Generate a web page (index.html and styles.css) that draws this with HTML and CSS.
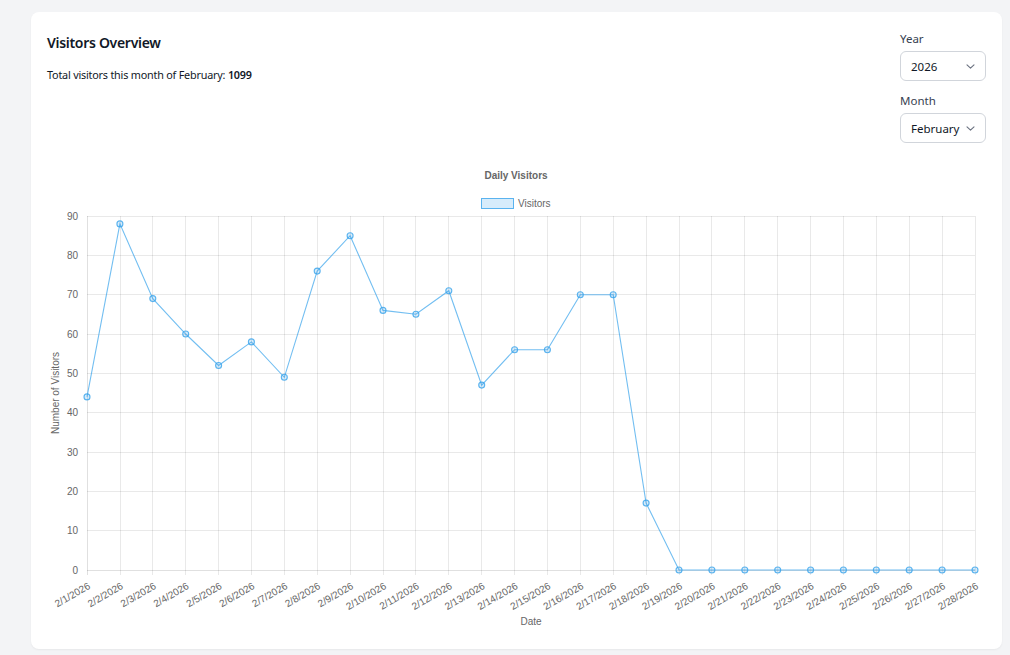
FILE: index.html
```html
<!DOCTYPE html>
<html lang="en">
<head>
<meta charset="utf-8">
<title>Visitors Overview</title>
<link rel="stylesheet" href="styles.css">
</head>
<body>
<main class="card">
  <div class="header">
    <div class="intro">
      <h2 class="title">Visitors Overview</h2>
      <p class="total">Total visitors this month of February: <strong>1099</strong></p>
    </div>
    <div class="filters">
      <div class="field">
        <div class="label">Year</div>
        <div class="select"><span>2026</span><svg class="chev" width="9" height="5" viewBox="0 0 9 5"><path d="M1 0.8l3.5 3.4 3.5-3.4" fill="none" stroke="#6b7280" stroke-width="1.1" stroke-linecap="round" stroke-linejoin="round"/></svg></div>
      </div>
      <div class="field">
        <div class="label">Month</div>
        <div class="select"><span>February</span><svg class="chev" width="9" height="5" viewBox="0 0 9 5"><path d="M1 0.8l3.5 3.4 3.5-3.4" fill="none" stroke="#6b7280" stroke-width="1.1" stroke-linecap="round" stroke-linejoin="round"/></svg></div>
      </div>
    </div>
  </div>
  <svg class="chart" width="939" height="480" viewBox="47 160 939 480">
    <text class="ctitle" x="516" y="179" text-anchor="middle">Daily Visitors</text>
    <rect x="481.5" y="198.5" width="32" height="10" fill="rgba(54,162,235,0.2)" stroke="rgba(54,162,235,0.8)" stroke-width="1"/>
    <text class="ctext" x="518" y="207">Visitors</text>
    <g class="grid">
      <line x1="87" y1="216.5" x2="975" y2="216.5"/>
      <line x1="87" y1="255.5" x2="975" y2="255.5"/>
      <line x1="87" y1="294.5" x2="975" y2="294.5"/>
      <line x1="87" y1="334.5" x2="975" y2="334.5"/>
      <line x1="87" y1="373.5" x2="975" y2="373.5"/>
      <line x1="87" y1="412.5" x2="975" y2="412.5"/>
      <line x1="87" y1="452.5" x2="975" y2="452.5"/>
      <line x1="87" y1="491.5" x2="975" y2="491.5"/>
      <line x1="87" y1="530.5" x2="975" y2="530.5"/>
      <line class="axis" x1="87" y1="570.5" x2="975" y2="570.5"/>
      <line class="axis" x1="87.5" y1="216" x2="87.5" y2="575"/>
      <line x1="120.5" y1="216" x2="120.5" y2="575"/>
      <line x1="152.5" y1="216" x2="152.5" y2="575"/>
      <line x1="185.5" y1="216" x2="185.5" y2="575"/>
      <line x1="218.5" y1="216" x2="218.5" y2="575"/>
      <line x1="251.5" y1="216" x2="251.5" y2="575"/>
      <line x1="284.5" y1="216" x2="284.5" y2="575"/>
      <line x1="317.5" y1="216" x2="317.5" y2="575"/>
      <line x1="350.5" y1="216" x2="350.5" y2="575"/>
      <line x1="383.5" y1="216" x2="383.5" y2="575"/>
      <line x1="415.5" y1="216" x2="415.5" y2="575"/>
      <line x1="448.5" y1="216" x2="448.5" y2="575"/>
      <line x1="481.5" y1="216" x2="481.5" y2="575"/>
      <line x1="514.5" y1="216" x2="514.5" y2="575"/>
      <line x1="547.5" y1="216" x2="547.5" y2="575"/>
      <line x1="580.5" y1="216" x2="580.5" y2="575"/>
      <line x1="613.5" y1="216" x2="613.5" y2="575"/>
      <line x1="646.5" y1="216" x2="646.5" y2="575"/>
      <line x1="679.5" y1="216" x2="679.5" y2="575"/>
      <line x1="711.5" y1="216" x2="711.5" y2="575"/>
      <line x1="744.5" y1="216" x2="744.5" y2="575"/>
      <line x1="777.5" y1="216" x2="777.5" y2="575"/>
      <line x1="810.5" y1="216" x2="810.5" y2="575"/>
      <line x1="843.5" y1="216" x2="843.5" y2="575"/>
      <line x1="876.5" y1="216" x2="876.5" y2="575"/>
      <line x1="909.5" y1="216" x2="909.5" y2="575"/>
      <line x1="942.5" y1="216" x2="942.5" y2="575"/>
      <line x1="975.5" y1="216" x2="975.5" y2="575"/>
    </g>
    <g class="ctext yticks" text-anchor="end">
      <text x="78" y="219.5">90</text>
      <text x="78" y="258.8">80</text>
      <text x="78" y="298.2">70</text>
      <text x="78" y="337.5">60</text>
      <text x="78" y="376.8">50</text>
      <text x="78" y="416.2">40</text>
      <text x="78" y="455.5">30</text>
      <text x="78" y="494.8">20</text>
      <text x="78" y="534.2">10</text>
      <text x="78" y="573.5">0</text>
    </g>
    <g class="ctext xticks" text-anchor="end">
      <text x="91" y="588" transform="rotate(-30 91 588)">2/1/2026</text>
      <text x="123.9" y="588" transform="rotate(-30 123.9 588)">2/2/2026</text>
      <text x="156.8" y="588" transform="rotate(-30 156.8 588)">2/3/2026</text>
      <text x="189.7" y="588" transform="rotate(-30 189.7 588)">2/4/2026</text>
      <text x="222.6" y="588" transform="rotate(-30 222.6 588)">2/5/2026</text>
      <text x="255.4" y="588" transform="rotate(-30 255.4 588)">2/6/2026</text>
      <text x="288.3" y="588" transform="rotate(-30 288.3 588)">2/7/2026</text>
      <text x="321.2" y="588" transform="rotate(-30 321.2 588)">2/8/2026</text>
      <text x="354.1" y="588" transform="rotate(-30 354.1 588)">2/9/2026</text>
      <text x="387" y="588" transform="rotate(-30 387 588)">2/10/2026</text>
      <text x="419.9" y="588" transform="rotate(-30 419.9 588)">2/11/2026</text>
      <text x="452.8" y="588" transform="rotate(-30 452.8 588)">2/12/2026</text>
      <text x="485.7" y="588" transform="rotate(-30 485.7 588)">2/13/2026</text>
      <text x="518.6" y="588" transform="rotate(-30 518.6 588)">2/14/2026</text>
      <text x="551.4" y="588" transform="rotate(-30 551.4 588)">2/15/2026</text>
      <text x="584.3" y="588" transform="rotate(-30 584.3 588)">2/16/2026</text>
      <text x="617.2" y="588" transform="rotate(-30 617.2 588)">2/17/2026</text>
      <text x="650.1" y="588" transform="rotate(-30 650.1 588)">2/18/2026</text>
      <text x="683" y="588" transform="rotate(-30 683 588)">2/19/2026</text>
      <text x="715.9" y="588" transform="rotate(-30 715.9 588)">2/20/2026</text>
      <text x="748.8" y="588" transform="rotate(-30 748.8 588)">2/21/2026</text>
      <text x="781.7" y="588" transform="rotate(-30 781.7 588)">2/22/2026</text>
      <text x="814.6" y="588" transform="rotate(-30 814.6 588)">2/23/2026</text>
      <text x="847.4" y="588" transform="rotate(-30 847.4 588)">2/24/2026</text>
      <text x="880.3" y="588" transform="rotate(-30 880.3 588)">2/25/2026</text>
      <text x="913.2" y="588" transform="rotate(-30 913.2 588)">2/26/2026</text>
      <text x="946.1" y="588" transform="rotate(-30 946.1 588)">2/27/2026</text>
      <text x="979" y="588" transform="rotate(-30 979 588)">2/28/2026</text>
    </g>
    <text class="ctext" x="531" y="625" text-anchor="middle">Date</text>
    <text class="ctext" x="59" y="393" text-anchor="middle" transform="rotate(-90 59 393)">Number of Visitors</text>
    <polyline class="line" points="87,396.9 119.9,223.9 152.8,298.6 185.7,334 218.6,365.5 251.4,341.9 284.3,377.3 317.2,271.1 350.1,235.7 383,310.4 415.9,314.3 448.8,290.7 481.7,385.1 514.6,349.7 547.4,349.7 580.3,294.7 613.2,294.7 646.1,503.1 679,570 711.9,570 744.8,570 777.7,570 810.6,570 843.4,570 876.3,570 909.2,570 942.1,570 975,570"/>
    <g class="pts">
      <circle cx="87" cy="396.9" r="3"/>
      <circle cx="119.9" cy="223.9" r="3"/>
      <circle cx="152.8" cy="298.6" r="3"/>
      <circle cx="185.7" cy="334" r="3"/>
      <circle cx="218.6" cy="365.5" r="3"/>
      <circle cx="251.4" cy="341.9" r="3"/>
      <circle cx="284.3" cy="377.3" r="3"/>
      <circle cx="317.2" cy="271.1" r="3"/>
      <circle cx="350.1" cy="235.7" r="3"/>
      <circle cx="383" cy="310.4" r="3"/>
      <circle cx="415.9" cy="314.3" r="3"/>
      <circle cx="448.8" cy="290.7" r="3"/>
      <circle cx="481.7" cy="385.1" r="3"/>
      <circle cx="514.6" cy="349.7" r="3"/>
      <circle cx="547.4" cy="349.7" r="3"/>
      <circle cx="580.3" cy="294.7" r="3"/>
      <circle cx="613.2" cy="294.7" r="3"/>
      <circle cx="646.1" cy="503.1" r="3"/>
      <circle cx="679" cy="570" r="3"/>
      <circle cx="711.9" cy="570" r="3"/>
      <circle cx="744.8" cy="570" r="3"/>
      <circle cx="777.7" cy="570" r="3"/>
      <circle cx="810.6" cy="570" r="3"/>
      <circle cx="843.4" cy="570" r="3"/>
      <circle cx="876.3" cy="570" r="3"/>
      <circle cx="909.2" cy="570" r="3"/>
      <circle cx="942.1" cy="570" r="3"/>
      <circle cx="975" cy="570" r="3"/>
    </g>
  </svg>
</main>
</body>
</html>
```

FILE: styles.css
```css
* { box-sizing: border-box; }
html, body { margin: 0; }
body {
  background: #f3f4f6;
  padding: 12px 8px 6px 31px;
  font-family: "Noto Sans", "Open Sans", sans-serif;
  color: #111827;
}
.card {
  background: #fff;
  border-radius: 8px;
  box-shadow: 0 1px 2px rgba(0,0,0,0.05);
  padding: 19px 16px 9px;
  width: 971px;
}
.header {
  display: flex;
  justify-content: space-between;
  align-items: flex-start;
  height: 112px;
}
.title {
  margin: 0;
  font-size: 14px;
  font-weight: 600;
  line-height: 24px;
  letter-spacing: -0.3px;
}
.total {
  margin: 12px 0 0;
  font-size: 10.8px;
  line-height: 16px;
  letter-spacing: -0.2px;
}
.total strong { font-weight: 600; }
.filters {
  width: 86px;
  display: flex;
  flex-direction: column;
  gap: 12px;
}
.label {
  font-size: 11.5px;
  line-height: 16px;
  color: #374151;
  margin-bottom: 4px;
}
.select {
  height: 30px;
  border: 1px solid #d1d5db;
  border-radius: 6px;
  padding: 0 10px;
  display: flex;
  align-items: center;
  justify-content: space-between;
  font-size: 11.5px;
  color: #111827;
}
.chev { display: block; }
.chart {
  display: block;
  margin-top: 17px;
}
.ctext, .ctitle {
  font-family: "Liberation Sans", Arial, sans-serif;
  font-size: 10px;
  fill: #666;
}
.ctitle { font-weight: bold; }
.grid line {
  stroke: rgba(0,0,0,0.085);
  stroke-width: 1;
}
.grid .axis { stroke: rgba(0,0,0,0.12); }
.line {
  fill: none;
  stroke: rgba(54,162,235,0.7);
  stroke-width: 1.1;
}
.pts circle {
  fill: rgba(54,162,235,0.2);
  stroke: rgba(54,162,235,0.8);
  stroke-width: 1.1;
}
```
